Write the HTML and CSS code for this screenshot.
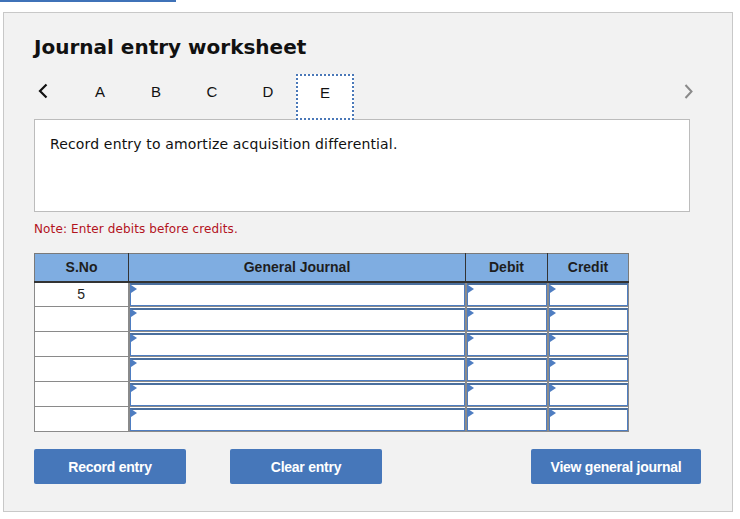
FILE: index.html
```html
<!DOCTYPE html>
<html>
<head>
<meta charset="utf-8">
<link rel="stylesheet" href="styles.css">
</head>
<body>
<div class="topbar"></div>
<div class="panel">
  <h1 class="title">Journal entry worksheet</h1>
  <div class="tabs">
    <div class="nav nav-prev">
      <svg width="10" height="16" viewBox="0 0 10 16"><path d="M8.5 1.5 L2 8 L8.5 14.5" fill="none" stroke="#111" stroke-width="2.2"/></svg>
    </div>
    <div class="tab">A</div>
    <div class="tab">B</div>
    <div class="tab">C</div>
    <div class="tab">D</div>
    <div class="tab tab-active">E</div>
    <div class="spacer"></div>
    <div class="nav nav-next">
      <svg width="9" height="15" viewBox="0 0 9 15"><path d="M1.5 1 L7.5 7.5 L1.5 14" fill="none" stroke="#8a8a8a" stroke-width="2"/></svg>
    </div>
  </div>
  <div class="prompt">Record entry to amortize acquisition differential.</div>
  <div class="note">Note: Enter debits before credits.</div>
  <table class="journal">
    <thead>
      <tr>
        <th class="c-no">S.No</th>
        <th class="c-gj">General Journal</th>
        <th class="c-dr">Debit</th>
        <th class="c-cr">Credit</th>
      </tr>
    </thead>
    <tbody>
      <tr><td class="num">5</td><td class="in"><span class="box"></span><span class="tri"></span></td><td class="in"><span class="box"></span><span class="tri"></span></td><td class="in"><span class="box"></span><span class="tri"></span></td></tr>
      <tr><td class="num"></td><td class="in"><span class="box"></span><span class="tri"></span></td><td class="in"><span class="box"></span><span class="tri"></span></td><td class="in"><span class="box"></span><span class="tri"></span></td></tr>
      <tr><td class="num"></td><td class="in"><span class="box"></span><span class="tri"></span></td><td class="in"><span class="box"></span><span class="tri"></span></td><td class="in"><span class="box"></span><span class="tri"></span></td></tr>
      <tr><td class="num"></td><td class="in"><span class="box"></span><span class="tri"></span></td><td class="in"><span class="box"></span><span class="tri"></span></td><td class="in"><span class="box"></span><span class="tri"></span></td></tr>
      <tr><td class="num"></td><td class="in"><span class="box"></span><span class="tri"></span></td><td class="in"><span class="box"></span><span class="tri"></span></td><td class="in"><span class="box"></span><span class="tri"></span></td></tr>
      <tr><td class="num"></td><td class="in"><span class="box"></span><span class="tri"></span></td><td class="in"><span class="box"></span><span class="tri"></span></td><td class="in"><span class="box"></span><span class="tri"></span></td></tr>
    </tbody>
  </table>
  <div class="buttons">
    <button class="btn btn-record">Record entry</button>
    <button class="btn btn-clear">Clear entry</button>
    <div class="spacer"></div>
    <button class="btn btn-view">View general journal</button>
  </div>
</div>
</body>
</html>
```

FILE: styles.css
```css
html, body {
  margin: 0;
  padding: 0;
  background: #ffffff;
  font-family: "DejaVu Sans", Verdana, sans-serif;
}

.topbar {
  width: 176px;
  height: 2px;
  background: #3f72b8;
}

.panel {
  box-sizing: border-box;
  margin: 10px 0 0 3px;
  width: 730px;
  height: 500px;
  border: 1px solid #c8c8c8;
  background: #f2f2f2;
  padding: 0 0 0 30px;
}

.title {
  margin: 0;
  padding-top: 20px;
  font-size: 20px;
  line-height: 28px;
  font-weight: bold;
  color: #111;
  letter-spacing: 0;
}

.tabs {
  display: flex;
  align-items: stretch;
  height: 46px;
  margin-top: 13px;
  width: 664px;
}

.nav {
  display: flex;
  align-items: center;
  padding-bottom: 12px;
  box-sizing: border-box;
}

.nav-prev {
  width: 38px;
  padding-left: 4px;
}

.nav-next {
  width: 14px;
}

.tab {
  width: 56px;
  display: flex;
  align-items: center;
  justify-content: center;
  padding-bottom: 11px;
  font-family: "Liberation Sans", Arial, sans-serif;
  font-size: 15px;
  color: #111;
  box-sizing: border-box;
}

.tab-active {
  width: 58px;
  background: #ffffff;
  border: 2px dotted #4a78b8;
  padding-bottom: 9px;
  position: relative;
  z-index: 1;
}

.spacer {
  flex: 1;
}

.prompt {
  box-sizing: border-box;
  width: 656px;
  height: 93px;
  margin-top: -1px;
  background: #ffffff;
  border: 1px solid #bcbcbc;
  padding: 15px 0 0 15px;
  font-size: 14px;
  line-height: 18px;
  letter-spacing: 0.15px;
  color: #111;
}

.note {
  margin-top: 9px;
  font-size: 12px;
  line-height: 16px;
  letter-spacing: 0.12px;
  color: #b3131d;
}

.journal {
  margin-top: 16px;
  border-collapse: collapse;
  width: 595px;
  font-family: "Liberation Sans", Arial, sans-serif;
  border: 1px solid #7a7a7a;
}

.journal th {
  height: 28px;
  padding: 0;
  background: #7fade1;
  color: #1e1e1e;
  font-size: 14px;
  font-weight: bold;
  border-left: 1px solid #333;
  border-bottom: 2px solid #333;
  box-sizing: border-box;
}

.journal th:first-child {
  border-left: 1px solid #7a7a7a;
}

.c-no { width: 94px; }
.c-gj { width: 337px; }
.c-dr { width: 82px; }
.c-cr { width: 81px; }

.journal td {
  height: 25px;
  padding: 0;
  background: #ffffff;
  border: 1px solid #8a8a8a;
  box-sizing: border-box;
}

.journal td.num {
  text-align: center;
  font-size: 14px;
  color: #222;
}

.journal td.in {
  position: relative;
  border-left: 2px solid #8a8a8a;
}

.box {
  display: block;
  box-sizing: border-box;
  height: 23px;
  border: 1px solid #4e7dc1;
  border-top: 2px solid #4a6f9e;
  background: #fff;
}

.tri {
  position: absolute;
  left: 1px;
  top: 2px;
  width: 0;
  height: 0;
  border-top: 4px solid transparent;
  border-bottom: 4px solid transparent;
  border-left: 6px solid #4e7dc1;
}

.buttons {
  display: flex;
  width: 667px;
  margin-top: 17px;
}

.btn {
  height: 35px;
  border: none;
  border-radius: 2px;
  background: #4677ba;
  color: #ffffff;
  font-family: "Liberation Sans", Arial, sans-serif;
  font-weight: bold;
  font-size: 14px;
  padding: 0;
  letter-spacing: -0.25px;
}

.btn-record { width: 152px; }
.btn-clear { width: 152px; margin-left: 44px; }
.btn-view { width: 170px; }
```
